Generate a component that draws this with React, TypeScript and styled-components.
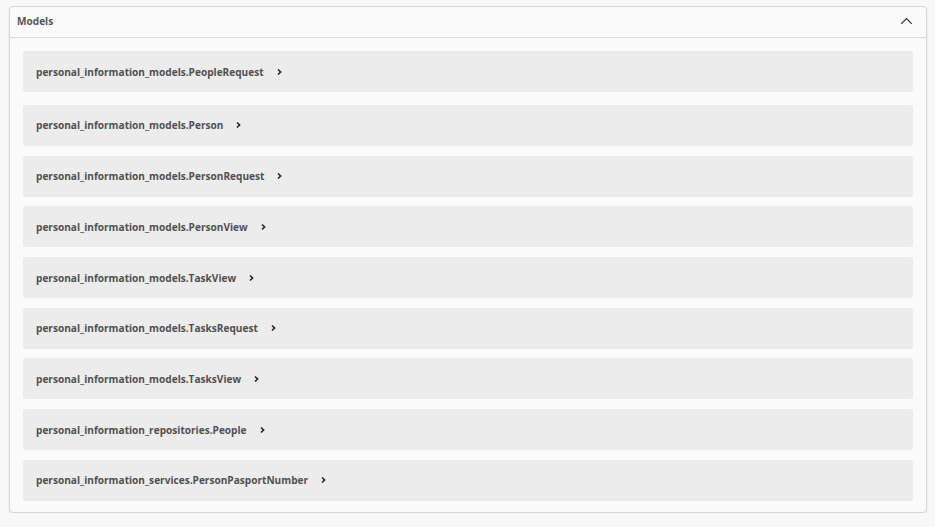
import React from "react";
import styled, { createGlobalStyle } from "styled-components";

const GlobalStyle = createGlobalStyle`
  html, body {
    margin: 0;
    padding: 0;
    background: #f8f8f8;
    font-family: "Open Sans", "Liberation Sans", sans-serif;
  }
`;

const Page = styled.div`
  padding: 6px 8px 0 9px;
`;

const Section = styled.section`
  width: 918px;
  box-sizing: border-box;
  border: 1px solid #d6d6d6;
  border-radius: 4px;
  background: #fafafa;
  box-shadow: 0 1px 2px rgba(0, 0, 0, 0.08);
`;

const Header = styled.div`
  display: flex;
  align-items: center;
  justify-content: space-between;
  box-sizing: content-box;
  height: 27px;
  padding: 0 12px 3px 7px;
  border-bottom: 1px solid #dcdcdc;
`;

const Title = styled.h4`
  margin: 0;
  font-size: 10.1px;
  font-weight: 700;
  color: #555;
`;

const Toggle = styled.button`
  display: flex;
  align-items: center;
  justify-content: center;
  width: 16px;
  height: 16px;
  padding: 0;
  border: none;
  background: transparent;
  cursor: pointer;
`;

const Body = styled.div`
  display: flex;
  flex-direction: column;
  gap: 9.7px;
  padding: 13px 13px 11px 13px;
`;

const Model = styled.div<{ $first?: boolean }>`
  display: flex;
  align-items: center;
  height: 41px;
  padding: 0 13px;
  background: #ececec;
  border-radius: 2px;
  margin-bottom: ${(p) => (p.$first ? "3.3px" : "0")};
  cursor: pointer;
`;

const ModelName = styled.span`
  font-size: 10.1px;
  font-weight: 700;
  color: #505050;
`;

const Arrow = styled.span`
  display: inline-flex;
  margin-left: 12px;
`;

const models = [
  "personal_information_models.PeopleRequest",
  "personal_information_models.Person",
  "personal_information_models.PersonRequest",
  "personal_information_models.PersonView",
  "personal_information_models.TaskView",
  "personal_information_models.TasksRequest",
  "personal_information_models.TasksView",
  "personal_information_repositories.People",
  "personal_information_services.PersonPasportNumber",
];

const ChevronRight = () => (
  <svg width="7" height="8" viewBox="0 0 7 8">
    <path d="M2 1.5 L4.6 4 L2 6.5" fill="none" stroke="#222" strokeWidth="1.6" />
  </svg>
);

const ChevronUp = () => (
  <svg width="13" height="8" viewBox="0 0 13 8">
    <path d="M1.2 6.8 L6.5 1.5 L11.8 6.8" fill="none" stroke="#333" strokeWidth="1.2" />
  </svg>
);

const App = () => {
  return (
    <>
      <GlobalStyle />
      <Page>
        <Section>
          <Header>
            <Title>Models</Title>
            <Toggle aria-label="Collapse models">
              <ChevronUp />
            </Toggle>
          </Header>
          <Body>
            {models.map((name, i) => (
              <Model key={name} $first={i === 0}>
                <ModelName>{name}</ModelName>
                <Arrow>
                  <ChevronRight />
                </Arrow>
              </Model>
            ))}
          </Body>
        </Section>
      </Page>
    </>
  );
};

export default App;
